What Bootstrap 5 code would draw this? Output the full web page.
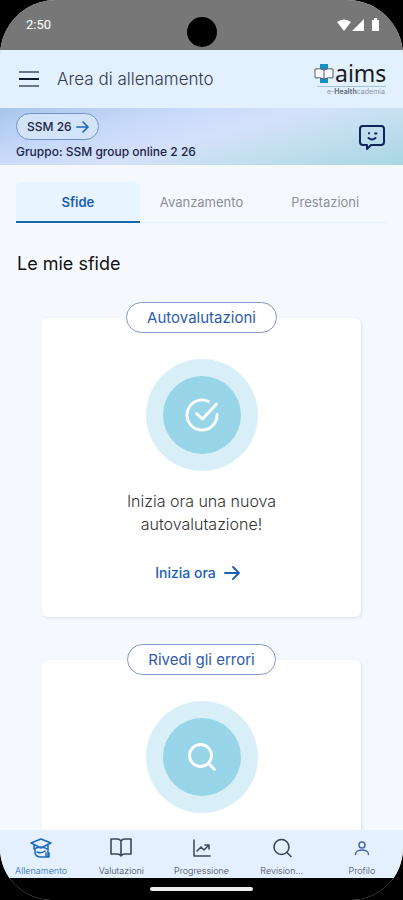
<!DOCTYPE html>
<html lang="it">
<head>
<meta charset="utf-8">
<meta name="viewport" content="width=device-width, initial-scale=1">
<title>Area di allenamento</title>
<link href="https://cdn.jsdelivr.net/npm/bootstrap@5.3.0/dist/css/bootstrap.min.css" rel="stylesheet">
<style>
  body { font-family: Inter, "Open Sans", sans-serif; background: #000; color: #333b52; }
  .phone { border-radius: 56px 56px 52px 52px; background: #f5f9fe; }
  .status { height: 50px; background: #777; font: 400 13px/16px Roboto, sans-serif; padding: 0 23px 0 26px; }
  .camera { width: 30px; height: 30px; top: 17px; left: 50%; margin-left: -15px; background: #000; }
  .app-head { height: 58px; background: #e3f0fe; padding: 0 15px 0 18px; }
  .app-title { font-size: 17px; font-weight: 300; line-height: 24px; color: #333b52; margin: 0 auto 0 17px; }
  .logo { width: 74px; height: 44px; }
  .banner { height: 57px; padding: 5px 17px 5px 16px; color: #1b2546;
    background: linear-gradient(165deg, #a7c6ea 0%, #c6d8fa 28%, #d5e1fb 50%, #c4dff0 70%, #a9d6e4 100%); }
  .course { height: 27px; padding: 0 8px 0 10px; font-size: 12px; font-weight: 500; line-height: 16px; color: #1b2546; border: 1px solid #6f91c8; background: #d3e3f8; }
  .group { font-size: 12px; font-weight: 500; line-height: 16px; margin-top: 4px; }
  .tabs { margin: 17px 16px 0; }
  .tabs .nav-link { height: 41px; padding: 0; font-size: 13px; font-weight: 400; line-height: 16px; color: #8b8f98; background: transparent; border: 0; border-bottom: 1px solid #e6f1fb; border-radius: 6px 6px 0 0; }
  .tabs .nav-link.active { color: #1a5fb8; font-weight: 600; background: #e8f4ff; border-bottom: 2px solid #1769ae; }
  .scroller { min-height: 0; overflow-y: auto; scrollbar-width: none; }
  .scroller::-webkit-scrollbar { display: none; }
  .section-title { font-size: 18px; font-weight: 400; line-height: 24px; color: #111; margin: 29px 17px 26px; }
  .challenge { margin: 0 42px 27px; }
  .pill { height: 31px; padding: 0 20px; font-size: 15px; font-weight: 400; line-height: 20px; color: #2d5cab; background: #fff; border: 1px solid #8796cf; margin-bottom: -15px; z-index: 1; }
  .panel { height: 299px; padding-top: 41px; background: #fff; border-radius: 6px; box-shadow: 1px 1px 3px rgba(50, 70, 110, .14); }
  .halo { width: 112px; height: 112px; background: #d8eff8; }
  .disc { width: 78px; height: 78px; background: #98d5e8; }
  .prompt { font-size: 16px; font-weight: 300; line-height: 23px; color: #333; margin: 19px 0 25px; }
  .start { font-size: 14px; font-weight: 500; line-height: 24px; padding-right: 8px; color: #1a5fb8; }
  .tabbar { height: 48px; padding: 0 1px; background: #e4f0fe; }
  .tabbar a { flex: 1 1 0; min-width: 0; padding-top: 6px; font-size: 9px; font-weight: 300; line-height: 12px; color: #3d4658; }
  .tabbar a.current { color: #1f68bd; }
  .tabbar svg { margin-bottom: 5px; }
  .gesture { height: 22px; background: #000; }
  .handle { width: 103px; height: 4px; background: #eee; }
  .line { fill: none; stroke: currentColor; stroke-linecap: round; stroke-linejoin: round; }
</style>
</head>
<body>
<div class="phone vh-100 d-flex flex-column overflow-hidden position-relative">
  <div class="status d-flex align-items-center justify-content-between text-white flex-shrink-0">
    <span>2:50</span>
    <span class="camera rounded-circle position-absolute"></span>
    <svg width="44" height="14" viewBox="0 0 44 14" fill="#fff" aria-hidden="true"><path d="M1 4Q8-1 15 4L8 13zM28 1v12H16zM36 2h2V0h3v2h2v11h-7z"/></svg>
  </div>
  <header class="app-head d-flex align-items-center flex-shrink-0">
    <button type="button" class="btn p-0 border-0 d-flex" aria-label="Menu">
      <svg width="22" height="18" viewBox="0 0 22 18" aria-hidden="true"><path d="M1 2h20M1 16h20" stroke="#68758a" stroke-width="2"/><path d="M1 9h20" stroke="#111a30" stroke-width="2"/></svg>
    </button>
    <h1 class="app-title">Area di allenamento</h1>
    <svg class="logo" viewBox="0 -5 74 44" role="img" aria-label="aims e-Healthcademia">
      <path d="M6 2h8v19H6z" fill="#168fc2"/>
      <path d="M1 7q5-1 9 1 4-2 9-1v9q-5-1-9 1-4-2-9-1z" fill="#f8fbff" stroke="#55606b"/><path d="M10 8v9" stroke="#55606b"/>
      <text x="21" y="20" font-family="Noto Sans, sans-serif" font-size="23" fill="#171b22">aims</text>
      <path d="M3 24.500h69" stroke="#9dc4e2"/>
      <text x="13" y="32" font-family="Inter, sans-serif" font-size="7" fill="#8a94a4">e-<tspan font-weight="700" fill="#667083">Health</tspan>cademia</text>
    </svg>
  </header>
  <section class="banner d-flex align-items-center justify-content-between flex-shrink-0">
    <div>
      <button type="button" class="course btn rounded-pill d-flex align-items-center gap-1">SSM 26
        <svg class="line" width="14" height="14" viewBox="0 0 14 14" stroke-width="1.700" color="#1f68bd" aria-hidden="true"><path d="M1 7h11M7 2l5 5-5 5"/></svg>
      </button>
      <div class="group">Gruppo: SSM group online 2 26</div>
    </div>
    <button type="button" class="btn p-0 border-0 d-flex" aria-label="Assistente">
      <svg class="line" width="28" height="26" viewBox="0 0 28 26" color="#12245c" stroke-width="2" aria-hidden="true"><path d="M5 2h18q3 0 3 3v13q0 3-3 3h-10l-4 4v-4H5q-3 0-3-3V5q0-3 3-3z"/><path d="M10.500 14q3.500 3 7 0"/><path d="M11 9v.5M17 9.500h1.500" stroke-width="1.800"/></svg>
    </button>
  </section>
  <nav class="tabs nav nav-justified flex-nowrap flex-shrink-0" role="tablist">
    <button type="button" class="nav-link active" role="tab" aria-selected="true">Sfide</button>
    <button type="button" class="nav-link" role="tab" aria-selected="false">Avanzamento</button>
    <button type="button" class="nav-link" role="tab" aria-selected="false">Prestazioni</button>
  </nav>
  <main class="scroller flex-grow-1">
    <h2 class="section-title">Le mie sfide</h2>
    <section class="challenge d-flex flex-column align-items-center">
      <h3 class="pill rounded-pill d-flex align-items-center position-relative">Autovalutazioni</h3>
      <div class="panel w-100 d-flex flex-column align-items-center text-center">
        <div class="halo rounded-circle d-flex align-items-center justify-content-center flex-shrink-0">
          <div class="disc rounded-circle d-flex align-items-center justify-content-center text-white">
            <svg class="line" width="34" height="34" viewBox="0 0 34 34" stroke-width="2.800" aria-hidden="true"><path d="M32 16.500A15 15 0 1 1 23.500 3.500"/><path d="M11.500 15.500l6 5.500L31.500 6"/></svg>
          </div>
        </div>
        <p class="prompt">Inizia ora una nuova<br>autovalutazione!</p>
        <a href="#" class="start text-decoration-none d-flex align-items-center gap-2">Inizia ora
          <svg class="line" width="16" height="16" viewBox="0 0 16 16" stroke-width="1.800" aria-hidden="true"><path d="M1 8h14M9 2l6 6-6 6"/></svg></a>
      </div>
    </section>
    <section class="challenge d-flex flex-column align-items-center">
      <h3 class="pill rounded-pill d-flex align-items-center position-relative">Rivedi gli errori</h3>
      <div class="panel w-100 d-flex flex-column align-items-center text-center">
        <div class="halo rounded-circle d-flex align-items-center justify-content-center flex-shrink-0">
          <div class="disc rounded-circle d-flex align-items-center justify-content-center text-white">
            <svg class="line" width="28" height="28" viewBox="0 0 28 28" stroke-width="2.800" aria-hidden="true"><circle cx="12.500" cy="12.500" r="11"/><path d="M20.500 20.500l6 6"/></svg>
          </div>
        </div>
      </div>
    </section>
  </main>
  <nav class="tabbar d-flex text-center flex-shrink-0">
    <a href="#" class="current text-decoration-none" aria-current="page"><svg class="line d-block mx-auto" width="24" height="24" viewBox="0 0 24 24" stroke-width="1.500" aria-hidden="true"><path d="M2 7l10-4 10 4-10 5zM5 9v4M19 8v13M17 17v4h3v-4M5 13q7-4 13 0M6 13v4q1 4 6 4h5M8 16q4 2 8-1"/></svg>Allenamento</a>
    <a href="#" class="text-decoration-none"><svg class="line d-block mx-auto" width="24" height="24" viewBox="0 0 24 24" stroke-width="1.600" aria-hidden="true"><path d="M12 5q-1-2-4-2H2v15h6q3 0 4 2 1-2 4-2h6V3h-6q-3 0-4 2zM12 5v15"/></svg>Valutazioni</a>
    <a href="#" class="text-decoration-none"><svg class="line d-block mx-auto" width="24" height="24" viewBox="0 0 24 24" stroke-width="1.500" aria-hidden="true"><path d="M4 4v16h16M7 15l4-4 3 3 5-5M15 9h4v4"/></svg>Progressione</a>
    <a href="#" class="text-decoration-none"><svg class="line d-block mx-auto" width="24" height="24" viewBox="0 0 24 24" stroke-width="1.600" aria-hidden="true"><circle cx="11.500" cy="11" r="7.500"/><path d="M17 16.500l4 4"/></svg>Revision...</a>
    <a href="#" class="text-decoration-none"><svg class="line d-block mx-auto" width="24" height="24" viewBox="0 0 24 24" stroke-width="1.500" color="#4a67ae" aria-hidden="true"><circle cx="12" cy="9" r="3"/><path d="M5.500 18.500c0-6 13-6 13 0"/></svg>Profilo</a>
  </nav>
  <div class="gesture d-flex align-items-center justify-content-center flex-shrink-0"><span class="handle rounded-pill"></span></div>
</div>
<script src="https://cdn.jsdelivr.net/npm/bootstrap@5.3.0/dist/js/bootstrap.bundle.min.js"></script>
</body>
</html>
